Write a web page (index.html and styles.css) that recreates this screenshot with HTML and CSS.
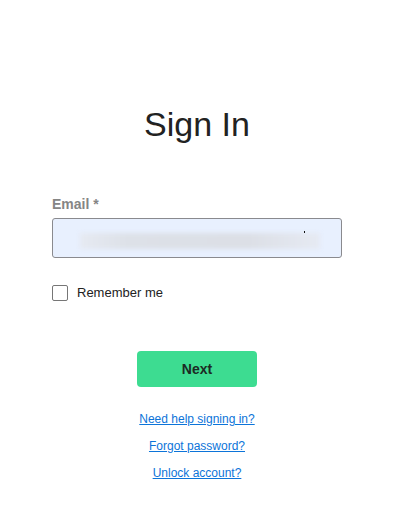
FILE: index.html
```html
<!DOCTYPE html>
<html lang="en">
<head>
<meta charset="utf-8">
<title>Sign In</title>
<link rel="stylesheet" href="styles.css">
</head>
<body>
<main class="signin">
  <h1 class="title">Sign In</h1>
  <form class="form">
    <label class="label" for="email">Email *</label>
    <div class="field" id="email">
      <span class="autofill"></span>
      <span class="caret"></span>
    </div>
    <label class="remember">
      <span class="checkbox"></span>
      <span class="remember-text">Remember me</span>
    </label>
    <div class="actions">
      <button type="button" class="next">Next</button>
    </div>
    <nav class="links">
      <a href="#" class="link">Need help signing in?</a>
      <a href="#" class="link">Forgot password?</a>
      <a href="#" class="link">Unlock account?</a>
    </nav>
  </form>
</main>
</body>
</html>
```

FILE: styles.css
```css
html, body {
  margin: 0;
  padding: 0;
  background: #ffffff;
}

body {
  font-family: "Liberation Sans", Arial, sans-serif;
  color: #222222;
  padding: 0 53px 0 52px;
}

.signin {
  padding-top: 104px;
  display: flex;
  flex-direction: column;
}

.title {
  margin: 0;
  font-size: 34px;
  line-height: 40px;
  font-weight: 400;
  text-align: center;
  color: #222222;
}

.form {
  display: flex;
  flex-direction: column;
  margin-top: 50px;
}

.label {
  font-size: 14px;
  line-height: 20px;
  font-weight: 700;
  color: #858585;
}

.field {
  position: relative;
  margin-top: 4px;
  height: 40px;
  box-sizing: border-box;
  border: 1px solid #8a8a8e;
  border-radius: 3px;
  background: #e8f0fe;
  display: flex;
  align-items: center;
  padding-left: 27px;
}

.autofill {
  display: block;
  width: 240px;
  height: 16px;
  margin-top: 6px;
  background: linear-gradient(90deg, #e6eaf2 0%, #dde1e8 20%, #dcdfe6 70%, #e6eaf3 100%);
  filter: blur(2px);
}

.caret {
  position: absolute;
  left: 251px;
  top: 12px;
  width: 1px;
  height: 2px;
  background: #111111;
}

.remember {
  margin-top: 27px;
  display: flex;
  align-items: center;
  gap: 9px;
  height: 16px;
}

.checkbox {
  width: 16px;
  height: 16px;
  box-sizing: border-box;
  border: 1px solid #767676;
  border-radius: 2px;
  background: #ffffff;
}

.remember-text {
  font-size: 13px;
  line-height: 16px;
  color: #222222;
}

.actions {
  display: flex;
  justify-content: center;
  margin-top: 50px;
}

.next {
  width: 120px;
  height: 36px;
  border: none;
  border-radius: 4px;
  background: #3ddc91;
  font-family: "Liberation Sans", Arial, sans-serif;
  font-size: 14px;
  font-weight: 700;
  color: #1c2a24;
  padding: 0;
}

.links {
  display: flex;
  flex-direction: column;
  align-items: center;
  gap: 11px;
  margin-top: 24px;
}

.link {
  font-size: 12px;
  line-height: 16px;
  color: #0c74d9;
  text-decoration: underline;
}
```
